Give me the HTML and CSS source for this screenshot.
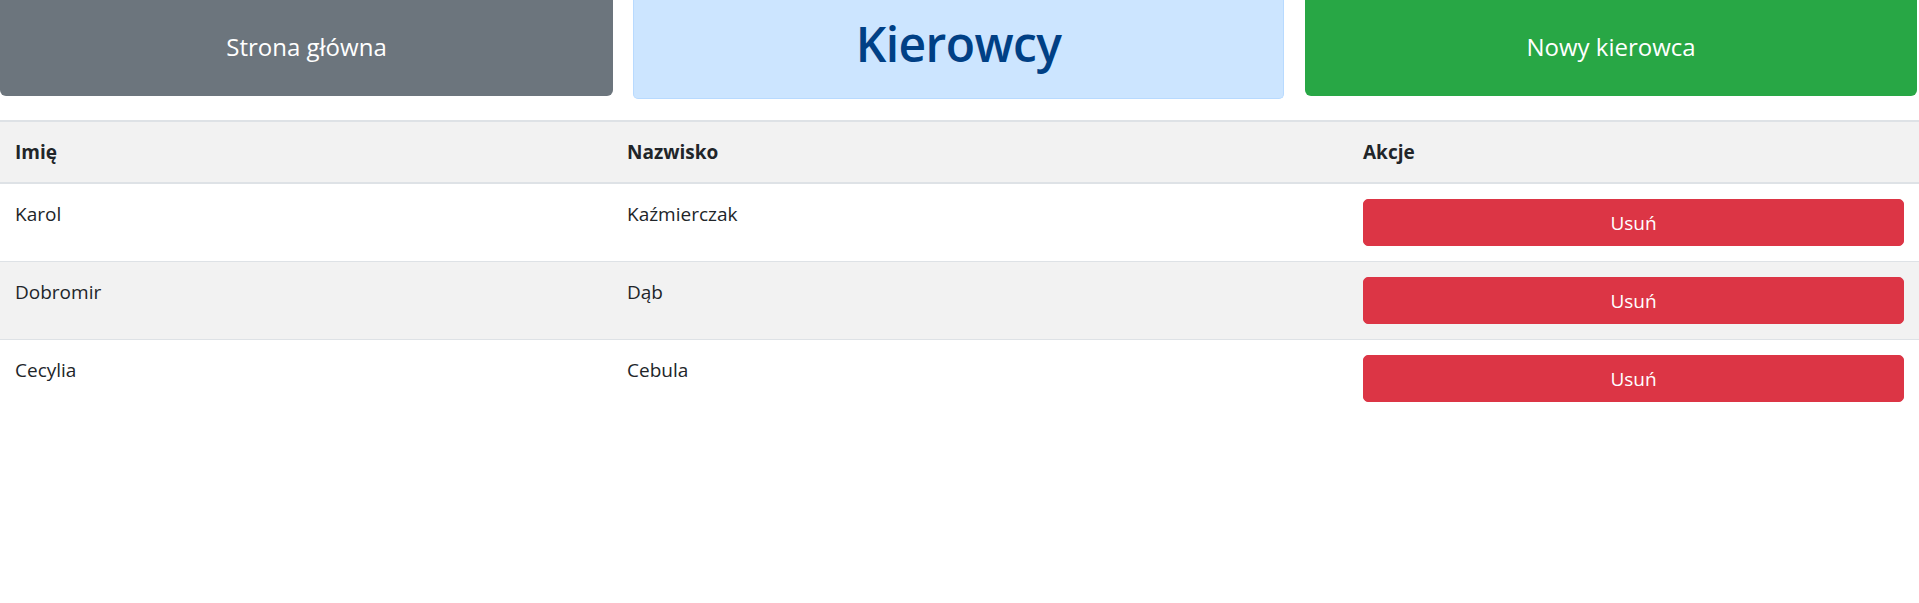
FILE: index.html
```html
<!DOCTYPE html>
<html lang="pl">
<head>
<meta charset="utf-8">
<title>Kierowcy</title>
<link rel="stylesheet" href="styles.css">
</head>
<body>
<div class="topbar">
  <a class="btn-big btn-gray" href="#">Strona główna</a>
  <div class="title-box"><h1 class="title">Kierowcy</h1></div>
  <a class="btn-big btn-green" href="#">Nowy kierowca</a>
</div>
<table class="drivers">
  <colgroup>
    <col class="c1"><col class="c2"><col class="c3">
  </colgroup>
  <thead>
    <tr><th>Imię</th><th>Nazwisko</th><th>Akcje</th></tr>
  </thead>
  <tbody>
    <tr><td>Karol</td><td>Kaźmierczak</td><td><button class="btn-del">Usuń</button></td></tr>
    <tr class="odd"><td>Dobromir</td><td>Dąb</td><td><button class="btn-del">Usuń</button></td></tr>
    <tr><td>Cecylia</td><td>Cebula</td><td><button class="btn-del">Usuń</button></td></tr>
  </tbody>
</table>
</body>
</html>
```
FILE: styles.css
```css
* { box-sizing: border-box; }
html, body { margin: 0; padding: 0; background: #fff; }
body {
  font-family: "Open Sans", "Noto Sans", "Liberation Sans", sans-serif;
  color: #212529;
  font-size: 19px;
  line-height: 30px;
}
.topbar {
  display: flex;
  align-items: flex-start;
  height: 120px;
}
.btn-big {
  display: flex;
  align-items: center;
  justify-content: center;
  height: 96px;
  color: #fff;
  text-decoration: none;
  font-size: 24px;
  border-radius: 0 0 6px 6px;
  padding-bottom: 2px;
}
.btn-gray { width: 613px; background: #6c757d; }
.btn-green { width: 612px; background: #28a745; margin-left: 21px; }
.title-box {
  width: 651px;
  height: 99px;
  margin-left: 20px;
  background: #cce5ff;
  border: 1px solid #b8daff;
  border-top: 0;
  border-radius: 0 0 5px 5px;
  display: flex;
  justify-content: center;
  padding-top: 14px;
}
.title {
  margin: 0;
  font-weight: 600;
  font-size: 48px;
  line-height: 60px;
  color: #004085;
  letter-spacing: -0.6px;
}
.drivers {
  width: 100%;
  border-collapse: collapse;
}
.c1 { width: 612px; }
.c2 { width: 736px; }
.drivers th, .drivers td {
  text-align: left;
  vertical-align: top;
  padding: 15px;
  border-top: 1px solid #dee2e6;
}
.drivers thead th {
  background: #f2f2f2;
  font-weight: 700;
  border-top: 2px solid #dee2e6;
  border-bottom: 2px solid #dee2e6;
  padding-top: 15px;
  padding-bottom: 15px;
}
.drivers tr.odd td { background: #f2f2f2; }
.btn-del {
  display: block;
  width: 100%;
  height: 47px;
  border: 1px solid #dc3545;
  border-radius: 5px;
  background: #dc3545;
  color: #fff;
  font-family: inherit;
  font-size: 19px;
  line-height: 30px;
  padding: 7px 15px;
  cursor: pointer;
}
```
